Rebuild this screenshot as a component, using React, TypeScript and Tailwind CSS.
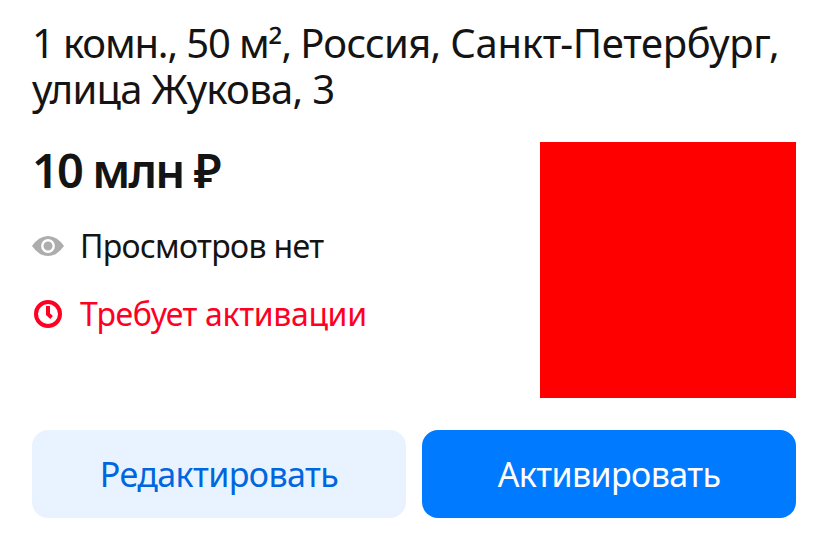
import React from "react";

export default function App() {
  return (
    <main className="h-[554px] w-[828px] overflow-hidden bg-white px-8 pt-5 font-['Noto_Sans',sans-serif] text-[#141414]">
      <h1 className="h-[92px] text-[40px] leading-[46px] tracking-[-0.7px] whitespace-nowrap">
        <span className="tracking-[-1.15px]">
          1 комн., 50 м<span className="relative top-[3px]">²</span>,{" "}
        </span>
        Россия, <span className="tracking-[-0.3px]">Санкт-Петербург,</span>
        <br />
        улица Жукова, 3
      </h1>
      <section className="mt-[30px] flex h-64 justify-between">
        <div>
          <p className="-mt-[2px] h-[60px] text-[47px] leading-[60px] font-semibold tracking-[-1.9px]">10 млн ₽</p>
          <p className="mt-[26px] flex h-10 items-center text-[32px] leading-10">
            <svg width="32" height="32" viewBox="0 0 32 32" className="mr-4">
              <path d="M0 16Q7 6 16 6t16 10q-7 10-16 10T0 16Z" fill="#adadad" />
              <circle cx="16" cy="16" r="5.7" fill="#adadad" stroke="white" strokeWidth="2.4" />
            </svg>
            <span className="tracking-[-0.65px]">Просмотров нет</span>
          </p>
          <p className="mt-7 flex h-10 items-center text-[32px] leading-10 text-[#ff0022]">
            <svg width="32" height="32" viewBox="0 0 32 32" className="mr-4" fill="none" stroke="currentColor" strokeWidth="4">
              <circle cx="16" cy="16" r="12" />
              <path d="M16 8v8.2l3.6 3.2" />
            </svg>
            <span className="tracking-[-0.35px]">Требует активации</span>
          </p>
        </div>
        <div className="size-64 bg-[#ff0000]" />
      </section>
      <div className="mt-8 flex gap-4 text-[34px] tracking-[-0.6px]">
        <button className="h-[88px] flex-1 rounded-2xl bg-[#e8f3ff] text-[#0066e0]">Редактировать</button>
        <button className="h-[88px] flex-1 rounded-2xl bg-[#007aff] text-white">Активировать</button>
      </div>
    </main>
  );
}
